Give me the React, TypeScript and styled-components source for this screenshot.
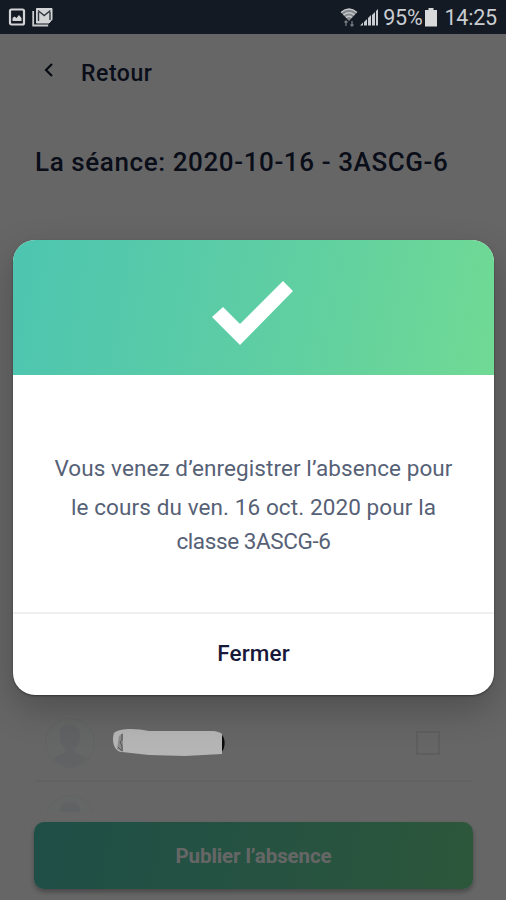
import React from "react";
import styled, { createGlobalStyle } from "styled-components";

const Global = createGlobalStyle`
  * { box-sizing: border-box; }
  body { margin: 0; background: #666; overflow: hidden; }
  button { border: 0; padding: 0; background: none; font: inherit; color: inherit; }
`;

const gradient = "linear-gradient(100deg, #4dc5b0 0%, #5dcda4 50%, #70da94 100%)";

const Screen = styled.div`
  width: 506px;
  height: 900px;
  display: flex;
  flex-direction: column;
  font-family: Roboto, "Noto Sans", sans-serif;
`;

const StatusBar = styled.header`
  height: 34px;
  flex: none;
  display: flex;
  align-items: center;
  padding: 0 9px 0 8px;
  background: #131a24;
  color: #c9ccd0;
  font-size: 21.5px;
  line-height: 34px;
`;

const StatusIcon = styled.svg<{ $gap?: number }>`
  flex: none;
  display: block;
  margin-left: ${(p) => p.$gap ?? 0}px;
`;

const StatusText = styled.span<{ $gap: number; $spacing: number }>`
  margin-left: ${(p) => p.$gap}px;
  letter-spacing: ${(p) => p.$spacing}px;
  padding-top: 2px;
`;

const Spacer = styled.div`
  flex: 1;
`;

const Page = styled.main`
  position: relative;
  flex: 1;
  min-height: 0;
  display: flex;
  flex-direction: column;
  background: #fff;
  color: #18233f;
`;

const BackRow = styled.div`
  display: flex;
  align-items: center;
  flex: none;
  height: 78px;
  padding-left: 43px;
  gap: 26px;
`;

const BackLabel = styled.span`
  font-size: 23px;
  font-weight: 500;
  letter-spacing: 0.55px;
`;

const BackArrow = styled.svg`
  display: block;
  margin-bottom: 6px;
`;

const Title = styled.h1`
  margin: 0;
  flex: none;
  height: 100px;
  padding: 0 35px;
  line-height: 101px;
  font-size: 26px;
  font-weight: 500;
  letter-spacing: 0.6px;
  white-space: nowrap;
`;

const StudentList = styled.div`
  flex: 1;
  min-height: 0;
  overflow: hidden;
  padding: 493px 33px 0 35px;
`;

const StudentRow = styled.div`
  height: 77px;
  display: flex;
  align-items: center;
  padding: 0 33px 0 10px;
  border-bottom: 2px solid #f3f4f4;
`;

const Avatar = styled.svg`
  display: block;
`;

const Scribble = styled.svg`
  display: block;
  position: relative;
  z-index: 2;
  margin-left: 17px;
`;

const Checkbox = styled.span`
  width: 24px;
  height: 24px;
  border: 2px solid #e8ecec;
`;

const Footer = styled.footer`
  flex: none;
  height: 88px;
  padding: 10px 33px 0 34px;
`;

const PublishButton = styled.button`
  display: block;
  width: 100%;
  height: 67px;
  border-radius: 10px;
  background: ${gradient};
  box-shadow: 0 3px 5px rgba(0, 0, 0, 0.3);
  color: #fff;
  font-size: 20.5px;
  font-weight: 700;
  letter-spacing: -0.1px;
`;

const Overlay = styled.div`
  position: absolute;
  inset: 0;
  z-index: 1;
  background: rgba(0, 0, 0, 0.6);
`;

const Dialog = styled.section`
  position: absolute;
  z-index: 3;
  left: 13px;
  top: 206px;
  width: 481px;
  height: 455px;
  display: flex;
  flex-direction: column;
  overflow: hidden;
  border-radius: 22px;
  background: #fff;
  box-shadow: 0 1px 2px rgba(0, 0, 0, 0.4), 0 14px 36px rgba(0, 0, 0, 0.24);
`;

const DialogBanner = styled.div`
  height: 135px;
  flex: none;
  display: flex;
  justify-content: center;
  padding: 41px 2px 0 0;
  background: ${gradient};
`;

const Message = styled.p`
  flex: 1;
  margin: 0;
  display: flex;
  flex-direction: column;
  align-items: center;
  padding-top: 74px;
  color: #566176;
  font-size: 22.5px;
  font-weight: 400;
`;

const MessageLine = styled.span<{ $height: number; $spacing: number }>`
  height: ${(p) => p.$height}px;
  line-height: 39px;
  letter-spacing: ${(p) => p.$spacing}px;
  white-space: nowrap;
`;

const CloseButton = styled.button`
  height: 83px;
  flex: none;
  padding-bottom: 3px;
  border-top: 2px solid #efeff0;
  color: #17183a;
  font-size: 22.5px;
  font-weight: 500;
  letter-spacing: 0.1px;
`;

function Person() {
  return (
    <Avatar width="50" height="50" viewBox="0 0 50 50">
      <circle cx="25" cy="25" r="24.5" fill="#fdfefe" stroke="#f3f5f6" />
      <path
        d="M25 7C17 7 14 12 15 19c0 6 3 10 5 12v4c-4 2-9 3-12 6a24 24 0 0 0 34 0c-3-3-8-4-12-6v-4c3-3 5-7 5-12 1-7-2-12-10-12Z"
        fill="#f0f5f7"
      />
    </Avatar>
  );
}

export default function App() {
  return (
    <Screen>
      <Global />
      <StatusBar>
        <StatusIcon width="18" height="18" viewBox="0 0 18 18">
          <rect x="2" y="1.5" width="14" height="15" rx="1.5" fill="none" stroke="#d3d4d5" strokeWidth="2.2" />
          <path d="M4.5 13V10l2-1.500 2 1.500 2.500-3 2.500 3v3Z" fill="#d3d4d5" />
        </StatusIcon>
        <StatusIcon $gap={6} width="22" height="20" viewBox="0 0 22 20">
          <path d="M1.200 4v14.500h15" fill="none" stroke="#c9cacc" strokeWidth="1.8" />
          <path d="M4.500 1.500h15.500v11l-3 3.500H4.500Z" fill="#d3d4d5" stroke="#d3d4d5" strokeLinejoin="round" />
          <path d="m6 3.500 6.200 5 6.200-5M6.500 5v9M18 5v8" fill="none" stroke="#30363f" strokeWidth="1.4" />
        </StatusIcon>
        <Spacer />
        <StatusIcon width="18" height="20" viewBox="0 0 18 20">
          <path d="M1 5.500q8-7 16 0L9 14Z" fill="#85898e" />
          <path d="M1 5.500q8-7 16 0M3.500 8q5.500-4.500 11 0M6 10.500q3-2.500 6 0" fill="none" stroke="#c5c7ca" strokeWidth="1.5" />
          <path d="M6 14v5M4.500 15.500 6 14l1.500 1.500M12 14v5M10.500 17.500 12 19l1.500-1.500" fill="none" stroke="#777b81" strokeWidth="1.3" />
        </StatusIcon>
        <StatusIcon $gap={2} width="19" height="18" viewBox="0 0 19 18">
          <path d="M0 17.500h3v-3ZM4 17.500h3V11l-3 3ZM8 17.500h3V7l-3 3ZM12 17.500h3V4l-3 3ZM16 17.500h2V1l-2 2Z" fill="#c9ccd0" />
        </StatusIcon>
        <StatusText $gap={4} $spacing={-0.2}>95%</StatusText>
        <StatusIcon $gap={3} width="12" height="19" viewBox="0 0 12 19">
          <path d="M3.500 0h5v2H12v16.500H0V2h3.500Z" fill="#d8d9da" />
        </StatusIcon>
        <StatusText $gap={7} $spacing={-0.2}>14:25</StatusText>
      </StatusBar>

      <Page>
        <BackRow>
          <BackArrow width="12" height="16" viewBox="0 0 12 16">
            <path d="M9 2 3 8l6 6" fill="none" stroke="#131b30" strokeWidth="2.2" />
          </BackArrow>
          <BackLabel>Retour</BackLabel>
        </BackRow>
        <Title>La séance: 2020-10-16 - 3ASCG-6</Title>
        <StudentList>
          <StudentRow>
            <Person />
            <Scribble width="114" height="30" viewBox="0 0 114 30">
              <path d="M108 6c6 2 6 14 1 19l-5-2V6Z" fill="#0c0c0c" />
              <path d="M2 5C7 0 24 0 37 3l62 0c7 0 10 2 11 3v20l-37 2-36-1-27-3C3 24-1 14 2 5Z" fill="#b5b5b5" />
              <path d="M7 8 11 5v19l-6-3Z" fill="#8b8b8b" />
              <path d="M10 6v6l-2 2 2 4v5l-4-4" fill="none" stroke="#555" />
            </Scribble>
            <Spacer />
            <Checkbox />
          </StudentRow>
          <StudentRow>
            <Person />
          </StudentRow>
        </StudentList>
        <Footer>
          <PublishButton>Publier l’absence</PublishButton>
        </Footer>
        <Overlay />
        <Dialog>
          <DialogBanner>
            <svg width="82" height="64" viewBox="0 0 82 64">
              <path d="m0 36 11-10 17 17L71 0l10 10-53 54Z" fill="#fff" />
            </svg>
          </DialogBanner>
          <Message>
            <MessageLine $height={39} $spacing={0.08}>Vous venez d’enregistrer l’absence pour</MessageLine>
            <MessageLine $height={34} $spacing={0.1}>le cours du ven. 16 oct. 2020 pour la</MessageLine>
            <MessageLine $height={39} $spacing={-0.4}>classe 3ASCG-6</MessageLine>
          </Message>
          <CloseButton>Fermer</CloseButton>
        </Dialog>
      </Page>
    </Screen>
  );
}
